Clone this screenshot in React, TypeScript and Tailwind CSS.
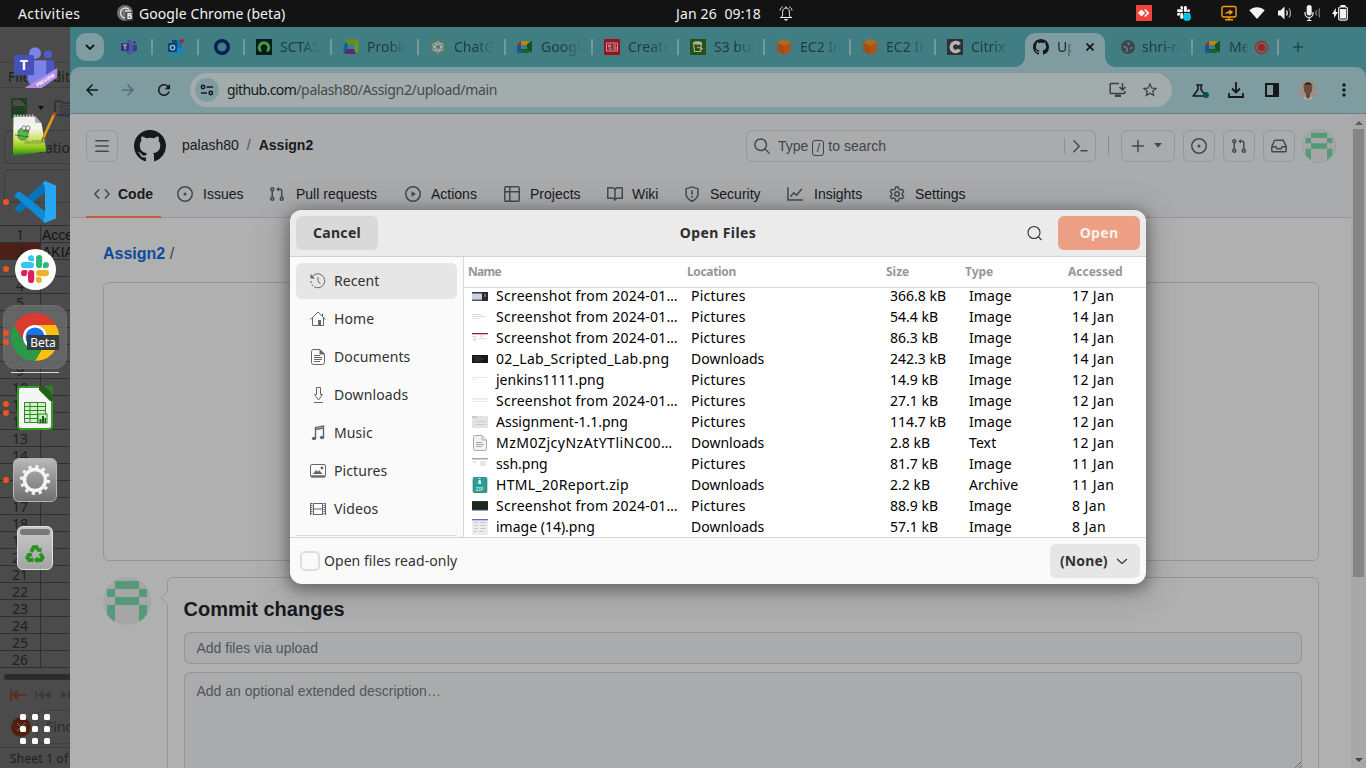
import React from "react";
import { MdArrowBack, MdArrowForward, MdMoreVert, MdOutlineScience, MdRefresh, MdStarBorder } from "react-icons/md";

const UI = "font-['Noto_Sans',sans-serif]";
const ARIAL = "font-['Liberation_Sans',sans-serif]";

/* ---------- shared drawings ---------- */

function GithubMark({ className }: { className: string }) {
  return (
    <svg viewBox="0 0 16 16" className={`shrink-0 ${className}`} fill="#15191d">
      <path d="M8 0C3.58 0 0 3.58 0 8c0 3.54 2.29 6.53 5.47 7.59.4.07.55-.17.55-.38 0-.19-.01-.82-.01-1.49-2.01.37-2.53-.49-2.69-.94-.09-.23-.48-.94-.82-1.13-.28-.15-.68-.52-.01-.53.63-.01 1.08.58 1.23.82.72 1.21 1.87.87 2.33.66.07-.52.28-.87.51-1.07-1.78-.2-3.64-.89-3.64-3.95 0-.87.31-1.59.82-2.15-.08-.2-.36-1.02.08-2.12 0 0 .67-.21 2.2.82.64-.18 1.32-.27 2-.27s1.36.09 2 .27c1.53-1.04 2.2-.82 2.2-.82.44 1.1.16 1.92.08 2.12.51.56.82 1.27.82 2.15 0 3.07-1.87 3.75-3.65 3.95.29.25.54.73.54 1.48 0 1.07-.01 1.93-.01 2.2 0 .21.15.46.55.38A8.01 8.01 0 0 0 16 8c0-4.42-3.58-8-8-8z" />
    </svg>
  );
}

function Oct({ children, className = "size-4" }: { children: React.ReactNode; className?: string }) {
  return (
    <svg viewBox="0 0 16 16" className={`shrink-0 ${className}`} fill="none" stroke="#44494f" strokeWidth="1.5" strokeLinecap="round" strokeLinejoin="round">
      {children}
    </svg>
  );
}

const oct = {
  code: <Oct><path d="M4.700 3.800L.9 8l3.800 4.200M11.300 3.800L15.100 8l-3.800 4.200" /></Oct>,
  issue: <Oct><circle cx="8" cy="8" r="7.250" /><circle cx="8" cy="8" r="1.500" fill="#44494f" stroke="none" /></Oct>,
  pull: <Oct><circle cx="3.250" cy="3.250" r="1.500" /><circle cx="3.250" cy="12.750" r="1.500" /><circle cx="12.750" cy="12.750" r="1.500" /><path d="M3.250 5v6M12.750 11V5c0-1-.6-1.750-1.750-1.750H8.500" /><path d="M10 .9v4.700L7.400 3.250z" fill="#44494f" stroke="none" /></Oct>,
  play: <Oct><circle cx="8" cy="8" r="7.250" /><path d="M6.500 5.200v5.600L11 8z" fill="#44494f" stroke="none" /></Oct>,
  table: <Oct><rect x=".75" y=".75" width="14.500" height="14.500" rx="1" /><path d="M.8 5.800h14.400M5.800 .8v14.400" /></Oct>,
  book: <Oct><path d="M8 4.500C8 3 6.800 1.750 5.250 1.750H.75v10.500h4.700C7 12.250 8 13 8 14.200c0-1.200 1-1.950 2.550-1.950h4.700V1.750h-4.500C9.200 1.750 8 3 8 4.500zV14" /></Oct>,
  shield: <Oct><path d="M8 .9l6 2v4.600c0 3.500-2.200 6-6 7.700-3.800-1.700-6-4.200-6-7.700V2.900z" /><path d="M8 4.700v3.500" /><circle cx="8" cy="10.700" r="1" fill="#44494f" stroke="none" /></Oct>,
  graph: <Oct><path d="M.9 1.700v12.400h14.300M3.800 10.200l3-3.500 2.700 2.500 5-6" /></Oct>,
  gear: <Oct><circle cx="8" cy="8" r="2.250" /><path d="M6.700 1h2.600l.5 2.100 1.400.8 2.100-.6 1.400 2.300L13.200 7.200v1.600l1.500 1.600-1.400 2.300-2.100-.6-1.400.8-.5 2.100H6.700l-.5-2.100-1.400-.8-2.100.6-1.400-2.300 1.500-1.600V7.200L1.300 5.600l1.400-2.300 2.100.6 1.400-.8z" strokeWidth="1.400" /></Oct>,
  inbox: <Oct><path d="M3.700 2.250h8.600l2.900 6.200v4.300c0 .6-.4 1-1 1H1.800c-.6 0-1-.4-1-1v-4.300zM.9 8.750h3.900l1.200 2h4l1.200-2h3.900" /></Oct>,
  bars: <Oct><path d="M1.700 2.700h12.600M1.700 8h12.600M1.700 13.300h12.600" strokeWidth="1.400" /></Oct>,
  search: <Oct><circle cx="6.700" cy="6.700" r="5.800" /><path d="M11 11l4 4" /></Oct>,
  plus: <Oct><path d="M8 2.500v11M2.500 8h11" /></Oct>,
  caret: <Oct><path d="M4 5h8L8 9.500z" fill="#44494f" stroke="none" /></Oct>,
  prompt: <Oct><path d="M.9 2.700L6.200 8.200.9 13.700M8 12.700h6" /></Oct>,
};

function Identicon({ className }: { className: string }) {
  return (
    <svg viewBox="0 0 48 48" className={className}>
      <defs><clipPath id="idc"><circle cx="24" cy="24" r="24" /></clipPath></defs>
      <circle cx="24" cy="24" r="24" fill="#a6a6a6" />
      <path clipPath="url(#idc)" fill="#549a79" d="M12 4h24v8H12zM4 12h8v8H4zM36 12h8v8h-8zM12 20h24v8H12zM4 28h8v16H4zM36 28h8v16h-8z" />
    </svg>
  );
}

function SlackMark({ className, mono }: { className: string; mono?: boolean }) {
  const c = mono ? ["#fff", "#fff", "#fff", "#fff"] : ["#36c5f0", "#2eb67d", "#e01e5a", "#ecb22e"];
  return (
    <svg viewBox="0 0 28 28" className={className}>
      <rect x="0" y="7" width="13" height="6.2" rx="3.1" fill={c[0]} />
      <path d="M13 6.200H10A3 3 0 1 1 13 3z" fill={c[0]} />
      <rect x="15" y="0" width="6.200" height="13.200" rx="3.100" fill={c[1]} />
      <path d="M22 13V10a3 3 0 1 1 3 3z" fill={c[1]} />
      <path d="M6.200 15v3a3.100 3.100 0 1 1-3.100-3z" fill={c[2]} />
      <rect x="7" y="15" width="6.200" height="13" rx="3.100" fill={c[2]} />
      <rect x="15" y="15" width="13" height="6.200" rx="3.100" fill={c[3]} />
      <path d="M15 22h3a3 3 0 1 1-3 3z" fill={c[3]} />
    </svg>
  );
}

/* ---------- GNOME top bar ---------- */

function TopBar() {
  return (
    <header className={`relative flex h-[27px] shrink-0 items-center bg-[#131313] pb-px text-[14px] text-[#f2f2f2] ${UI}`}>
      <span className="ml-[18px] w-[99px] tracking-[0.4px]">Activities</span>
      <svg viewBox="0 0 16 16" className="size-4">
        <circle cx="8" cy="8" r="8" fill="#727272" />
        <path d="M12 4.500A5 5 0 1 0 8 13M8 6h6" fill="none" stroke="#ddd" strokeWidth="1.400" />
        <rect x="8.500" y="7" width="7.500" height="8.500" rx="1" fill="#484848" />
        <text x="9.800" y="14" fontSize="8" fontWeight="700" fill="#fff" fontFamily="Noto Sans">B</text>
      </svg>
      <span className="ml-[6px] w-[537px] tracking-[0.08px]">Google Chrome (beta)</span>
      <span className="w-[102px] whitespace-pre tracking-[0.15px]">Jan 26  09:18</span>
      <svg viewBox="0 0 16 16" className="size-4" fill="none" stroke="#f2f2f2" strokeWidth="1">
        <path d="M2 12.500h12M3.500 12.500C5 11 4.500 8 4.700 6c.3-2 1.500-3 3.300-3s3 1 3.300 3c.2 2-.3 5 1.200 6.500M2 5.500c.3-1.800 1.200-3 2.700-3.800M14 5.500c-.3-1.800-1.200-3-2.700-3.800M8 1.500V3" />
        <path d="M6 14h4l-1 1.500H7z" fill="#f2f2f2" stroke="none" />
      </svg>
      <div className="ml-[342px] flex items-center">
        <svg viewBox="0 0 16 16" className="size-4">
          <path fill="#ef443b" d="M0 0h16v16H0z" />
          <path fill="#fff" d="M2 8l3.500-3.500L9 8l-3.500 3.500z" />
          <path fill="none" stroke="#fff" strokeWidth="1.700" d="M8.700 4.500L12.200 8l-3.500 3.500" />
        </svg>
        <div className="relative ml-6 size-4">
          <SlackMark mono className="mt-px ml-px size-[13px]" />
          <span className="absolute right-px bottom-0 size-2 rounded-full bg-[#00bfe8]" />
        </div>
        <svg viewBox="0 0 16 16" className="ml-[29px] size-4" fill="none" stroke="#f99b11" strokeWidth="1.400">
          <rect x="1" y="1.500" width="14" height="10.500" rx="1.500" />
          <path d="M4 14.700h8M8 12v2.500" />
          <path d="M4 9.500c.5-2.500 2-3.300 4.300-3.300V4.300L12.300 7.300 8.300 10V8.300C6.500 8.200 5 8.500 4 9.500z" fill="#f99b11" stroke="none" />
        </svg>
        <svg viewBox="0 0 16 12" className="ml-3 h-3 w-4"><path fill="#f2f2f2" d="M.3 3.300C4.500-.8 11.500-.8 15.700 3.300L8 12z" /></svg>
        <svg viewBox="0 0 16 16" className="ml-3 size-4" fill="none" stroke="#f2f2f2" strokeWidth="1.200">
          <path d="M1 5.500h2.500L7.500 1.500v13L3.500 10.500H1z" fill="#f2f2f2" stroke="none" />
          <path d="M9.500 5.500c1 1.500 1 3.500 0 5" /><path d="M12 3.500c2 2.500 2 6.500 0 9" stroke="#aaa" />
        </svg>
        <svg viewBox="0 0 16 16" className="ml-[11px] size-4" fill="none" stroke="#f2f2f2" strokeWidth="1.200">
          <rect x="2.700" y="0" width="5" height="10.500" rx="2.500" fill="#f2f2f2" stroke="none" />
          <path d="M1 7v1.500a4 4 0 0 0 8 0V7M5.200 12.500v3M3 15.500h4.500" />
          <path d="M13 5.500c-1.500 1-1.500 4 0 5M16 3.500c-1.300 1.500-1.300 7 0 9" stroke="#888" />
        </svg>
        <svg viewBox="0 0 16 16" className="ml-3 size-4">
          <path fill="#f2f2f2" d="M4 3L0 9h2v4l4-6H3.800z" />
          <path fill="none" stroke="#f2f2f2" strokeWidth="1.200" d="M8.500 2h5a1.800 1.800 0 0 1 1.800 1.800v9.600a1.800 1.800 0 0 1-1.800 1.800h-5a1.800 1.800 0 0 1-1.800-1.800V3.800A1.800 1.800 0 0 1 8.500 2z" />
          <path fill="#f2f2f2" d="M8.500 0h5v2h-5zM8 4h6v9.500H8z" />
        </svg>
      </div>
    </header>
  );
}

/* ---------- spreadsheet behind the dock ---------- */

const ROWS = Array.from({ length: 26 }, (_, i) => i + 1);

function Spreadsheet() {
  return (
    <div className={`flex h-full flex-col overflow-hidden whitespace-nowrap bg-[#4b4b4b] text-[#202020] ${UI}`}>
      <div className="h-9 shrink-0 border-b border-[#3f3f3f]" />
      <div className="flex h-[25px] shrink-0 items-center border-b border-[#3f3f3f] pt-[2px] pl-2 text-[14px]">File&nbsp;&nbsp;&nbsp;&nbsp;Edit</div>
      <div className="flex h-10 shrink-0 items-center pl-[11px]">
        <svg viewBox="0 0 16 20" className="h-5 w-4 shrink-0" fill="none" stroke="#123c10" strokeWidth="1.300"><path d="M2 1h8l5 5v13H1V2z" /><path d="M10 1h5v5zM3 9h10v7H3zM3 11.500h10M3 14h10M6.500 9v7M10 9v7" /></svg>
        <svg viewBox="0 0 6 4" className="ml-[11px] h-1 w-1.5 shrink-0"><path d="M0 0h6L3 4z" fill="#111" /></svg>
        <svg viewBox="0 0 24 18" className="ml-[10px] h-[18px] w-6 shrink-0" fill="none" stroke="#252525" strokeWidth="1.200"><path d="M1 16V3l1-1h5l2 2h14v12z" /><path d="M7 7h12v11H7zM9 10h8M9 12h8M9 14h6" stroke="#30304a" /></svg>
      </div>
      <div className="mt-0.5 ml-1 flex h-[34px] shrink-0 items-center rounded-l-md border border-r-0 border-[#3d3d3d] pl-[7px] text-[14px]">Liberation Sans</div>
      <div className="mt-[5px] ml-1 h-[34px] shrink-0 rounded-tl-md border border-r-0 border-[#3d3d3d]" />
      <div className="h-[23px] shrink-0 border-b border-[#303030]" />
      <div className="shrink-0">
        {ROWS.map((n) => (
          <div key={n} className="flex h-[17px] border-b border-[#303030] text-[14px] leading-[18px]">
            <div className={n === 2 ? "w-10 shrink-0 bg-[#4b2016] text-center" : "w-10 shrink-0 text-center"}>{n}</div>
            <div className={`flex-1 border-l border-[#303030] pl-px text-[14px] leading-[18px] text-[#141414] ${ARIAL}`}>
              {n === 1 ? "Access" : n === 2 ? "AKIA" : ""}
            </div>
          </div>
        ))}
      </div>
      <div className="mt-[6px] ml-1 h-1.5 shrink-0 rounded-l-full bg-[#2c2c2c]" />
      <div className="mt-2 ml-[10px] flex h-3.5 shrink-0 items-center gap-[9px]">
        <svg viewBox="0 0 16 12" className="h-3 w-4 shrink-0" stroke="#5f2a20" strokeWidth="1.600" fill="none"><path d="M1 0v12M3 6h13" /><path d="M2 6l5-3v6z" fill="#5f2a20" /></svg>
        <svg viewBox="0 0 16 10" className="h-2.5 w-4 shrink-0" fill="#3a3a3a"><path d="M0 1h1.500v8H0zM8.500 1v8L2 5zM15.500 1v8L9 5z" /></svg>
        <svg viewBox="0 0 10 10" className="h-2.5 w-2.5 shrink-0" fill="#3a3a3a"><path d="M1 1l6 4-6 4zM8 1l4 4-4 4z" /></svg>
      </div>
      <div className="mt-2 ml-[11px] flex h-[34px] shrink-0 items-center text-[14px] text-[#2b2b2b]">
        <svg viewBox="0 0 20 20" className="size-5 shrink-0"><circle cx="10" cy="10" r="10" fill="#50200f" /><path d="M6 6l8 8M14 6l-8 8" stroke="#85756f" /></svg>
        <div className="ml-[6px] flex h-[34px] flex-1 items-center rounded-l-md border border-r-0 border-[#3f3f3f] pb-[2px] pl-[8px]">Find</div>
      </div>
      <div className="mt-[3px] h-6 shrink-0 border-t border-[#3b3b3b] pl-[10px] text-[12px] leading-[22px] tracking-[0.2px]">Sheet 1 of 1</div>
    </div>
  );
}

/* ---------- dock ---------- */

function Dots({ count }: { count: number }) {
  return (
    <div className="flex w-[12px] shrink-0 flex-col items-center gap-[3px]">
      {Array.from({ length: count }, (_, i) => <span key={i} className="size-1.5 rounded-full bg-[#e95420]" />)}
    </div>
  );
}

function DockItem({ dots = 0, className, children }: { dots?: number; className: string; children: React.ReactNode }) {
  return (
    <div className={`flex shrink-0 items-center ${className}`}>
      <Dots count={dots} />
      <div className="flex w-[46px] justify-center">{children}</div>
    </div>
  );
}

function Dock() {
  return (
    <nav className="absolute inset-0 flex flex-col pt-[6px]">
      <DockItem className="h-[68px]">
        <svg viewBox="0 0 46 43" className="ml-[2px] h-[43px] w-[46px]">
          <circle cx="22" cy="6.500" r="6.200" fill="#7b83eb" /><circle cx="35.500" cy="8" r="4.300" fill="#5059c9" />
          <path d="M14 14h20v16c0 7-5 11-11 11s-9-4-9-9z" fill="#7b83eb" /><path d="M34 14h8v14c0 3-3 6-8 6z" fill="#4d56c6" />
          <rect x="0" y="8.500" width="21" height="21" rx="2" fill="#4650b8" />
          <text x="6" y="24" fontSize="15" fontWeight="700" fill="#fff" fontFamily="Noto Sans">T</text>
          <path d="M11 43L45 22v10L29 43z" fill="#b08ae6" />
          <text transform="translate(24.500 42) rotate(-32)" fontSize="5" fontWeight="700" fill="#fff" fontFamily="Noto Sans">PREVIEW</text>
        </svg>
      </DockItem>
      <DockItem className="h-[67px]">
        <svg viewBox="0 0 46 46" className="size-[46px]">
          <defs>
            <linearGradient id="pad" x1="0" y1="0" x2="0" y2="1"><stop offset="0" stopColor="#eee" /><stop offset=".3" stopColor="#f4f6ef" /><stop offset=".6" stopColor="#c8e55a" /><stop offset=".8" stopColor="#8ec61a" /><stop offset="1" stopColor="#1f8a14" /></linearGradient>
          </defs>
          <path d="M1.500 4.500h22l6 7 5 28-33.500 4z" fill="url(#pad)" />
          <path d="M2 3.500h21" stroke="#bdbdbd" strokeWidth="2" strokeDasharray="1.500 1.500" />
          <path d="M22.500 4l1 7 6 0z" fill="#a7aab0" />
          <path d="M6 19c2-4 9-4 11 0l-2 7c-3 3-7 3-9-1z" fill="#55b848" stroke="#355f2c" strokeWidth=".6" />
          <path d="M3 23l14 2M10 15l7 4M11 19h6" stroke="#4a4a3c" strokeWidth=".8" />
          <circle cx="12" cy="16" r="2.200" fill="#eee" stroke="#444" strokeWidth=".6" /><circle cx="16" cy="16" r="2.200" fill="#eee" stroke="#444" strokeWidth=".6" />
          <text x="12" y="32" fontSize="6.500" fontStyle="italic" fill="#59722c" fontFamily="Liberation Serif" transform="rotate(-3 12 32)">Notepad</text>
          <path d="M31 26.500L42 2.500" stroke="#e79a11" strokeWidth="2.600" /><path d="M42 3.500l1.500-3" stroke="#c4453c" strokeWidth="2.600" /><path d="M31.500 25.500l-2 4" stroke="#7a5530" strokeWidth="1.300" />
        </svg>
      </DockItem>
      <DockItem dots={1} className="h-[67px]">
        <svg viewBox="0 0 42 42" className="size-[42px]">
          <path d="M0 27.500L31 0v11.500L5 32z" fill="#0a73b8" /><path d="M0 14.500L5 10l26 20.500V42z" fill="#0f8ad4" />
          <path d="M31 0l11 4.500v33L31 42l-2-2 2-4V6l-2-4z" fill="#27a7f2" />
        </svg>
      </DockItem>
      <DockItem dots={1} className="h-[68px]">
        <div className="flex size-[41px] items-center justify-center rounded-full bg-white"><SlackMark className="size-7" /></div>
      </DockItem>
      <div className="mt-[2px] ml-[3px] flex h-16 w-16 shrink-0 items-center rounded-xl border border-[#6d6d6d] bg-[#6b6b6b]/80">
        <div className="-ml-[4px]"><Dots count={2} /></div>
        <div className="relative -ml-px size-12">
          <svg viewBox="0 0 48 48" className="size-12">
            <path d="M24 12h20.800A24 24 0 0 0 3.200 12L13.600 30A12 12 0 0 1 24 12z" fill="#dd3a2e" />
            <path d="M44.800 12H24a12 12 0 0 1 10.400 18L24 48A24 24 0 0 0 44.800 12" fill="#fdc00f" />
            <path d="M3.200 12A24 24 0 0 0 24 48l10.400-18a12 12 0 0 1-20.800 0z" fill="#2a9a4a" />
            <circle cx="24" cy="24" r="12" fill="#fff" /><circle cx="24" cy="24" r="9.500" fill="#1a73e8" />
          </svg>
          <span className={`absolute top-[22px] left-4 flex h-[15px] w-8 items-center justify-center bg-[#353d42] text-[12px] text-white ${UI}`}>Beta</span>
        </div>
      </div>
      <div className="mt-[3px] ml-[11px] h-px w-12 shrink-0 bg-[#d8d8d8]" />
      <DockItem dots={2} className="h-[70px]">
        <svg viewBox="0 0 36 44" className="h-11 w-9">
          <path d="M4 1h19l12 13v26a3 3 0 0 1-3 3H4a3 3 0 0 1-3-3V4a3 3 0 0 1 3-3z" fill="#f5f5f5" stroke="#2fa022" strokeWidth="2" />
          <path d="M22 0h4l10 10v5h-3L22 4z" fill="#245f1c" /><path d="M28 0h8v8.500z" fill="#23861a" />
          <path d="M7.500 16.500h21v20h-21zM7.500 20.500h21M7.500 24.500h21M7.500 28.500h21M7.500 32.500h21M13 16.500v20M20.500 16.500v20" fill="#d5f0cc" stroke="#2c8a24" />
          <rect x="21" y="28" width="9" height="9" fill="#c9ecc0" stroke="#2c8a24" /><path d="M22.500 33h2v4h-2zM25 30h2v7h-2zM27.500 32h1.500v5h-1.500z" fill="#176112" />
        </svg>
      </DockItem>
      <DockItem dots={1} className="h-[74px]">
        <div className="flex size-11 items-center justify-center rounded-md border border-[#b5b5b5] bg-linear-to-b from-[#b8b8b8] to-[#6f6f6f]">
          <svg viewBox="0 0 30 30" className="size-[30px]">
            <circle cx="15" cy="15" r="13.500" fill="none" stroke="#f4f4f4" strokeWidth="3" strokeDasharray="3.200 3.860" />
            <circle cx="15" cy="15" r="10.500" fill="none" stroke="#f4f4f4" strokeWidth="3.500" />
          </svg>
        </div>
      </DockItem>
      <DockItem className="h-[62px]">
        <div className="flex h-11 w-9 flex-col items-center rounded-md border border-[#e0e0e0] bg-linear-to-b from-[#c9c9c9] to-[#a4a4a4]">
          <div className="mt-0.5 h-[6px] w-[30px] rounded-full bg-[#787878]" />
          <svg viewBox="0 0 20 20" className="mt-[9px] size-5" fill="none" stroke="#279021" strokeWidth="3.800">
            <path d="M6.300 7.800l2.300-4.600h3l1.600 2.700" /><path d="M15.300 9.500l2.300 4-1.500 2.500h-4.300" /><path d="M8.500 16H4l-1.600-2.500 2-3.500" />
            <path d="M11 7l5 1.500 1-5zM12.500 12.500v7L8.800 16zM1.500 9.500l5-1 1 5z" fill="#279021" stroke="none" />
          </svg>
        </div>
      </DockItem>
      <div className="mt-[135px] ml-5 grid size-[30px] grid-cols-3 gap-1.5">
        {Array.from({ length: 9 }, (_, i) => <span key={i} className="size-1.5 rounded-[1.5px] bg-white" />)}
      </div>
    </nav>
  );
}

/* ---------- browser ---------- */

const FAV = "size-4 shrink-0";
const favicons: Record<string, React.ReactNode> = {
  teams: <svg viewBox="0 0 16 16" className={FAV}><circle cx="8.500" cy="2.500" r="2.300" fill="#4c51a2" /><circle cx="13.500" cy="3.500" r="1.500" fill="#373d8c" /><path d="M5 5h7v7a3.500 3.500 0 0 1-7 0z" fill="#4f549f" /><path d="M12 6h4v5a2.500 2.500 0 0 1-4 1z" fill="#373d8c" /><rect y="4" width="8" height="8" rx="1" fill="#32387f" /><path d="M2 6h4M4 6v4.500" stroke="#bbb" strokeWidth="1.200" /></svg>,
  outlook: <svg viewBox="0 0 16 16" className={FAV}><path d="M4 1h10v13H4z" fill="#1c6f9f" /><path d="M4 1h5v5H4z" fill="#0d4c7e" /><path d="M2 9h14v6.500H3z" fill="#1885b4" /><rect y="4" width="9" height="9" rx="1" fill="#06467c" /><circle cx="4.500" cy="8.500" r="2.200" fill="none" stroke="#b4b8bb" strokeWidth="1.300" /><circle cx="14" cy="2" r="2" fill="#a52425" /></svg>,
  ring: <svg viewBox="0 0 16 16" className={FAV}><circle cx="8" cy="8" r="6.300" fill="none" stroke="#03204f" strokeWidth="3.400" /></svg>,
  snow: <svg viewBox="0 0 16 16" className={FAV}><path d="M0 0h16v16H0z" fill="#031d24" /><path d="M5 12.300a4.800 4.800 0 1 1 6 0" fill="none" stroke="#4c9a30" strokeWidth="3" /></svg>,
  cube: <svg viewBox="0 0 16 16" className={FAV}><path d="M4 0h10l2 3-3 2H4L2 3z" fill="#72881c" /><path d="M2 3l3 2-1 6-1 3-3-1z" fill="#0a6394" /><path d="M1 14l3-4h8l1 5H3z" fill="#5b2a77" /><path d="M16 3l-1 9-2 3-2-5 1-5z" fill="#629b25" /></svg>,
  gpt: <svg viewBox="0 0 16 16" className={FAV}><rect width="16" height="16" rx="2" fill="#537a6d" /><g fill="none" stroke="#a6b3af" strokeWidth="1"><ellipse cx="8" cy="8" rx="2.500" ry="5.500" /><ellipse cx="8" cy="8" rx="2.500" ry="5.500" transform="rotate(60 8 8)" /><ellipse cx="8" cy="8" rx="2.500" ry="5.500" transform="rotate(120 8 8)" /></g></svg>,
  meet: <svg viewBox="0 0 16 16" className={FAV}><path d="M4 2h8v4H4z" fill="#b58b08" /><path d="M4 2v4H0z" fill="#9e2d25" /><path d="M0 6h4v8H1l-1-1z" fill="#244f9d" /><path d="M4 10h8v4H4z" fill="#16622f" /><path d="M10 5l5-3v12l-5-4z" fill="#145126" /></svg>,
  red: <svg viewBox="0 0 16 16" className={FAV}><path d="M0 0h16v16H0z" fill="#941522" /><path d="M2.500 4h11v8h-11zM4.500 6h2.500v2H4.500zM4.500 10H8M9 6h3M9 8h3v2H9" fill="none" stroke="#c69a9f" /></svg>,
  s3: <svg viewBox="0 0 16 16" className={FAV}><path d="M0 0h16v16H0z" fill="#285012" /><path d="M3.500 4l1 8.500h6l1-8.500zM3.500 4c1-1.500 7-1.500 8 0s-7 1.500-8 0M7 8l6 2" fill="none" stroke="#a8b5a0" strokeWidth="1.200" /></svg>,
  ec2: <svg viewBox="0 0 16 16" className={FAV}><path d="M8 0l7 3.500L8 7 1 3.500z" fill="#b16b1b" /><path d="M1 3.500L8 7v9l-7-4z" fill="#a44c16" /><path d="M15 3.500L8 7v9l7-4z" fill="#b15318" /></svg>,
  citrix: <svg viewBox="0 0 16 16" className={FAV}><path d="M0 0h16v16H0z" fill="#302f35" /><path d="M12.500 5.500A4.500 4.500 0 1 0 12.500 10.500" fill="none" stroke="#b5b5b5" strokeWidth="3.500" /></svg>,
  globe: <svg viewBox="0 0 16 16" className={FAV}><circle cx="8" cy="8" r="7" fill="#3e4447" /><path d="M3 7.500c2 0 3.500.5 4 2s-.5 1.500 0 3.500M8.500 3c-1 1.500 0 2 1.500 2.500M10 9c1 .5 2 0 2.500-1" stroke="#5c8388" strokeWidth="1.600" fill="none" /></svg>,
};

const SEP = <span className="ml-auto h-4 w-0.5 shrink-0 bg-[#77999c]" />;
const FADE = "overflow-hidden whitespace-nowrap [mask-image:linear-gradient(to_right,black_55%,transparent)]";

function Tab({ icon, label, width, last }: { icon: string; label: string; width: string; last?: boolean }) {
  return (
    <div className={`flex h-full shrink-0 items-center pl-[11px] ${width}`}>
      {favicons[icon]}
      <span className={`ml-2 w-10 pb-px ${FADE}`}>{label}</span>
      {!last && SEP}
    </div>
  );
}

function TabStrip() {
  return (
    <div className={`flex h-10 shrink-0 items-center bg-[#407e84] pl-[6px] text-[14px] text-[#203c40] ${UI}`}>
      <div className="mr-px flex size-7 shrink-0 items-center justify-center rounded-[10px] bg-[#7f9da0]">
        <svg viewBox="0 0 10 6" className="h-1.5 w-2.5" fill="none" stroke="#101517" strokeWidth="1.800"><path d="M1 1l4 4 4-4" /></svg>
      </div>
      <div className="flex w-[48px] shrink-0 items-center pl-4">{favicons.teams}{SEP}</div>
      <div className="flex w-[46px] shrink-0 items-center pl-[15px]">{favicons.outlook}{SEP}</div>
      <div className="flex w-[46px] shrink-0 items-center pl-[15px]">{favicons.ring}{SEP}</div>
      <Tab icon="snow" label="SCTASK" width="w-[87px]" />
      <Tab icon="cube" label="Problem" width="w-[87px]" />
      <Tab icon="gpt" label="ChatGPT" width="w-[87px]" />
      <Tab icon="meet" label="Google" width="w-[87px]" />
      <Tab icon="red" label="Create" width="w-[86px]" />
      <Tab icon="s3" label="S3 buck" width="w-[86px]" />
      <Tab icon="ec2" label="EC2 Inst" width="w-[86px]" />
      <Tab icon="ec2" label="EC2 Inst" width="w-[85px]" />
      <Tab icon="citrix" label="Citrix W" width="w-[88px]" last />
      <div className="relative ml-px h-10 w-20 shrink-0 pt-[6px]">
        <span className="absolute bottom-0 -left-[10px] size-[10px] bg-[radial-gradient(circle_at_0_0,transparent_9.5px,#7f9da0_10px)]" />
        <span className="absolute -right-[10px] bottom-0 size-[10px] bg-[radial-gradient(circle_at_100%_0,transparent_9.5px,#7f9da0_10px)]" />
        <div className="flex h-[34px] items-center rounded-t-[10px] bg-[#7f9da0] pb-[6px] pl-2 text-[#17262a]">
          <GithubMark className="size-4" />
          <span className={`ml-2 w-4 pb-px ${FADE}`}>Upl</span>
          <svg viewBox="0 0 8 8" className="ml-[13px] size-2" stroke="#111719" strokeWidth="1.700"><path d="M.5.5l7 7M7.500.5l-7 7" /></svg>
        </div>
      </div>
      <div className="ml-[4px] flex w-[84px] shrink-0 items-center pl-[11px]">
        {favicons.globe}<span className={`ml-[6px] w-10 pb-px ${FADE}`}>shri-ram</span>{SEP}
      </div>
      <div className="flex w-[86px] shrink-0 items-center pl-[12px]">
        {favicons.meet}<span className="ml-2 w-5 overflow-hidden pb-px whitespace-nowrap [mask-image:linear-gradient(to_right,black_65%,transparent)]">Mee</span>
        <svg viewBox="0 0 16 16" className="ml-[5px] size-[15px] shrink-0"><circle cx="8" cy="8" r="6.500" fill="none" stroke="#a02e2c" strokeWidth="1.700" /><circle cx="8" cy="8" r="4" fill="#a02320" /></svg>
        {SEP}
      </div>
      <svg viewBox="0 0 10 10" className="ml-[14px] size-2.5" stroke="#20484c" strokeWidth="1.500"><path d="M5 0v10M0 5h10" /></svg>
    </div>
  );
}

function Toolbar() {
  return (
    <div className="bg-[#407e84]">
      <div className={`flex h-[47px] items-center rounded-t-[10px] border-b border-[#637f82] bg-[#7f9da0] text-[#15191b] ${UI}`}>
        <MdArrowBack size={18} className="ml-[13px]" />
        <MdArrowForward size={18} className="ml-[18px] text-[#536c6f]" />
        <MdRefresh size={18} className="ml-[18px]" />
        <div className="ml-[17px] flex h-[34px] w-[982px] items-center rounded-full bg-[#a3acac] pl-[5px]">
          <div className="flex size-6 items-center justify-center rounded-full bg-[#7f9da0]">
            <svg viewBox="0 0 14 12" className="h-3 w-3.5" fill="none" stroke="#15191b" strokeWidth="1.500"><circle cx="3" cy="3" r="1.700" /><path d="M6.500 3H13M1 9h6" /><circle cx="10.800" cy="9" r="1.700" /></svg>
          </div>
          <span className="ml-2 w-[882px] pb-px text-[14px] tracking-[-0.33px] text-[#45494a]"><span className="tracking-[-0.6px] text-[#15191b]">github.com</span>/palash80/Assign2/upload/main</span>
          <svg viewBox="0 0 18 16" className="h-4 w-[18px]" fill="none" stroke="#3b4042" strokeWidth="1.500"><path d="M10 1.500H2a.8.8 0 0 0-.8.8v8.400c0 .5.300.8.800.8h13c.5 0 .8-.3.800-.8V9M13.500 1v6M10.500 5l3 3 3-3" /><path d="M6 12.500h6v2.500H6z" fill="#3b4042" stroke="none" /></svg>
          <MdStarBorder size={18} className="ml-[14px]" color="#3b4042" />
        </div>
        <div className="relative ml-[18px]"><MdOutlineScience size={19} /><span className="absolute right-0 bottom-0.5 size-1.5 rounded-full bg-[#04515a]" /></div>
        <svg viewBox="0 0 16 16" className="ml-[19px] size-4" fill="none" stroke="#15191b" strokeWidth="1.800"><path d="M8 0v10M4 6.500l4 4 4-4M1 11v4h14v-4" /></svg>
        <svg viewBox="0 0 16 16" className="ml-[20px] size-4"><path d="M2 2h12v12H2z" fill="none" stroke="#15191b" strokeWidth="2" /><path d="M9 2h6v12H9z" fill="#15191b" /></svg>
        <svg viewBox="0 0 20 20" className="ml-[18px] size-5">
          <defs><clipPath id="face"><circle cx="10" cy="10" r="10" /></clipPath></defs>
          <g clipPath="url(#face)"><path d="M0 0h20v20H0z" fill="#97908c" /><path d="M3 20c1-5 13-5 14 0z" fill="#b1aaa9" /><path d="M8 12h4v5l-2 2-2-2z" fill="#6d4537" /><ellipse cx="10" cy="8.500" rx="4.300" ry="6" fill="#714a3b" /><path d="M5.500 7C5 1 15 1 14.500 7l-1-2.500h-7z" fill="#1d1b1b" /></g>
        </svg>
        <MdMoreVert size={20} className="ml-4" />
      </div>
    </div>
  );
}

const NAV = [
  { icon: oct.code, label: "Code", width: "w-[75px] gap-2", active: true },
  { icon: oct.issue, label: "Issues", width: "w-[84px] gap-[10px]" },
  { icon: oct.pull, label: "Pull requests", width: "w-[128px] gap-[11px]" },
  { icon: oct.play, label: "Actions", width: "w-[91px] gap-[10px]" },
  { icon: oct.table, label: "Projects", width: "w-[95px] gap-[10px]" },
  { icon: oct.book, label: "Wiki", width: "w-[69px] gap-[9px]" },
  { icon: oct.shield, label: "Security", width: "w-[95px] gap-[10px]" },
  { icon: oct.graph, label: "Insights", width: "w-[94px] gap-[11px]" },
  { icon: oct.gear, label: "Settings", width: "w-[95px] gap-[10px]" },
];

const BTN = "flex h-8 shrink-0 items-center justify-center rounded-md border border-[#93979b]";

function GithubPage() {
  return (
    <div className={`flex min-h-0 flex-1 bg-[#b0b0b0] text-[14px] text-[#16191d] ${ARIAL}`}>
      <div className="flex w-[1281px] flex-col overflow-hidden">
        <div className="h-[104px] shrink-0 border-b border-[#92969a] bg-[#a9abad]">
          <div className="flex h-16 items-center pl-4">
            <div className={`${BTN} w-8`}>{oct.bars}</div>
            <GithubMark className="ml-4 size-8" />
            <span className="ml-4 pb-px">palash80</span>
            <span className="mx-2 pb-px text-[#4c5157]">/</span>
            <span className="pb-px font-bold">Assign2</span>
            <div className="ml-auto flex items-center">
              <div className="flex h-8 w-[350px] items-center rounded-md border border-[#93979b] pl-[7px] text-[#40454c]">
                {oct.search}
                <span className="ml-2">Type</span>
                <span className="mx-1 mt-[3px] flex h-4 w-3 items-center justify-center rounded-[3px] border border-[#40454c] text-[12px]">/</span>
                <span>to search</span>
                <span className="mr-2 ml-auto h-4 w-px bg-[#8b8f93]" />
                {oct.prompt}
                <span className="w-[6px]" />
              </div>
              <span className="ml-3 h-5 w-px bg-[#8b8f93]" />
              <div className={`${BTN} ml-3 w-[54px] gap-1`}>{oct.plus}{oct.caret}</div>
              <div className={`${BTN} ml-2 w-8`}>{oct.issue}</div>
              <div className={`${BTN} ml-2 w-8`}>{oct.pull}</div>
              <div className={`${BTN} ml-2 w-8`}>{oct.inbox}</div>
              <div className="mr-[15px] ml-[7px] size-[34px] rounded-full border border-[#979a9c]"><Identicon className="size-8" /></div>
            </div>
          </div>
          <div className="flex gap-2 pl-4">
            {NAV.map(({ icon, label, width, active }) => (
              <div key={label} className={`flex h-10 shrink-0 items-center border-b-2 pb-[6px] pl-2 ${width} ${active ? "border-[#bb5e48] font-bold" : "border-transparent"}`}>
                {icon}{label}
              </div>
            ))}
          </div>
        </div>
        <div className="flex flex-1 flex-col pr-8 pl-[33px]">
          <div className="mt-[26px] h-5 text-[16px] leading-5 text-[#3b3f44]"><b className="text-[#0c4b9c]">Assign2</b> /</div>
          <div className="mt-[18px] h-[279px] shrink-0 rounded-md border border-[#92969a]" />
          <div className="mt-4 flex h-[260px] shrink-0">
            <Identicon className="size-12 shrink-0" />
            <div className="relative ml-4 flex-1 rounded-md border border-[#92969a] px-4">
              <svg viewBox="0 0 8 16" className="absolute top-3 -left-[8px] h-4 w-2"><path d="M8.500 0L1 8l7.500 8" fill="#b0b0b0" stroke="#92969a" /></svg>
              <h2 className="mt-[17px] -ml-[0.5px] text-[20px] leading-7 font-bold">Commit changes</h2>
              <div className="mt-[9px] flex h-8 items-center rounded-md border border-[#92969a] bg-[#a9abad] pl-[11.500px] text-[#50555b]">Add files via upload</div>
              <div className="relative mt-2 h-[130px] rounded-md border border-[#92969a] bg-[#a9abad] pt-2 pl-[11.500px] text-[#50555b]">Add an optional extended description…</div>
              <svg viewBox="0 0 8 8" className="absolute top-[184px] right-[17px] size-2" stroke="#666"><path d="M0 8l8-8M4 8l4-4" /></svg>
            </div>
          </div>
        </div>
      </div>
      <div className="flex w-[15px] flex-col items-center bg-[#a8a8a8]">
        <svg viewBox="0 0 8 4" className="mt-[7px] h-1 w-2 shrink-0"><path d="M4 0l4 4H0z" fill="#5c5c5c" /></svg>
        <div className="mt-1 h-[448px] w-[11px] shrink-0 bg-[#858585]" />
        <svg viewBox="0 0 8 4" className="mt-auto mb-1.5 h-1 w-2 shrink-0"><path d="M4 4l4-4H0z" fill="#444" /></svg>
      </div>
    </div>
  );
}

/* ---------- file chooser ---------- */

const sideIcon = "size-4 shrink-0";
const PLACES: { label: string; icon: React.ReactNode }[] = [
  { label: "Recent", icon: <svg viewBox="0 0 16 16" className={sideIcon} fill="none" stroke="#666"><path d="M2.200 3.500A7 7 0 1 1 4 13.700M8 4v4l2.500 3" /><path d="M.5 1v4.500H5z" fill="#666" stroke="none" /><path d="M1 8a7 7 0 0 0 3 5.700" strokeDasharray="2 1.500" /></svg> },
  { label: "Home", icon: <svg viewBox="0 0 16 16" className={sideIcon} fill="none" stroke="#666"><path d="M.5 8.500L8 1l7.500 7.500M2.500 7v7.500h11V7M12.500 5V2.500" /><path d="M8 9h3v6H8z" fill="#666" stroke="none" /></svg> },
  { label: "Documents", icon: <svg viewBox="0 0 16 16" className={sideIcon} fill="none" stroke="#666"><path d="M3 .5h7l4.500 4.500v8.500a2 2 0 0 1-2 2H3.500a2 2 0 0 1-2-2v-11a2 2 0 0 1 1.500-2zM4 6.500h6M4 8.500h8M4 10.500h8M4 12.500h6" /><path d="M10 1v4h4z" fill="#666" /></svg> },
  { label: "Downloads", icon: <svg viewBox="0 0 16 16" className={sideIcon} fill="none" stroke="#666"><path d="M6.500.5h4v7h2L8.500 13l-4-5.500h2zM4 15.500h9" /></svg> },
  { label: "Music", icon: <svg viewBox="0 0 16 16" className={sideIcon} fill="none" stroke="#666"><path d="M5.500 13V2.500l8-1.500v11M5.500 4.500l8-1.500" strokeWidth="1.400" /><ellipse cx="4" cy="13.500" rx="2.200" ry="1.800" fill="#666" stroke="none" /><ellipse cx="12" cy="12.500" rx="2.200" ry="1.800" fill="#666" stroke="none" /></svg> },
  { label: "Pictures", icon: <svg viewBox="0 0 16 16" className={sideIcon} fill="none" stroke="#666"><rect x=".5" y="1.500" width="15" height="12.500" rx="1.500" /><path d="M1 13.300h14" strokeWidth="2" /><path d="M3 11l3-4 2 2 1-2 3.500 4z" fill="#666" stroke="none" /><circle cx="12" cy="5" r="1.400" fill="#666" stroke="none" /></svg> },
  { label: "Videos", icon: <svg viewBox="0 0 16 16" className={sideIcon} fill="none" stroke="#666"><path d="M3.500 2v12M12.500 2v12M3.500 2.500h9M3.500 8h9M3.500 13.500h9" /><path d="M1.500 2v12M14.500 2v12" strokeWidth="2" strokeDasharray="1 1" /><path d="M.5 2v12M15.500 2v12" /></svg> },
];

const T = ({ children }: { children: React.ReactNode }) => <svg viewBox="0 0 16 16" className="mb-px size-4 shrink-0">{children}</svg>;

const SHOT = "tracking-[0.24px]";
const FILES: [React.ReactNode, string, string, string, string, string, string][] = [
  [<T><path d="M0 4h16v9H0z" fill="#cdd3de" /><path d="M0 4h16v1.500H0z" fill="#303744" /><path d="M10 4h6v9h-6z" fill="#292a32" /><path d="M12 6h2v3h-2z" fill="#806b62" /><path d="M0 11.500h10V13H0z" fill="#515a69" /></T>, "Screenshot from 2024-01…", "Pictures", "366.8 kB", "Image", "17 Jan", SHOT],
  [<T><path d="M0 5h9v1H0zM0 7h14v1H0zM0 9h7v1H0z" fill="#dadde1" /></T>, "Screenshot from 2024-01…", "Pictures", "54.4 kB", "Image", "14 Jan", SHOT],
  [<T><path d="M0 3h16v1.300H0z" fill="#8e2032" /><path d="M0 6h5v1H0zM1 8h3v3H1zM8 5h3v2H8zM7 8h8v1H7z" fill="#efdadd" /></T>, "Screenshot from 2024-01…", "Pictures", "86.3 kB", "Image", "14 Jan", SHOT],
  [<T><path d="M0 4h16v8H0z" fill="#15171a" /><path d="M1 6h8M3 8h9M2 10h7" stroke="#4d5157" strokeWidth=".7" /></T>, "02_Lab_Scripted_Lab.png", "Downloads", "242.3 kB", "Image", "14 Jan", "tracking-[0.33px]"],
  [<T><path d="M0 5h16v1H0zM0 7h5v1H0z" fill="#e8e9ec" /></T>, "jenkins1111.png", "Pictures", "14.9 kB", "Image", "12 Jan", ""],
  [<T><path d="M0 5h16v1.500H0zM0 8h16v1H0z" fill="#e6ebef" /></T>, "Screenshot from 2024-01…", "Pictures", "27.1 kB", "Image", "12 Jan", SHOT],
  [<T><path d="M0 2h16v12H0z" fill="#e2e4e6" /><path d="M0 2h5v2H0zM4 7h10v1H4zM3 10h11v1H3z" fill="#c9cdd2" /></T>, "Assignment-1.1.png", "Pictures", "114.7 kB", "Image", "12 Jan", ""],
  [<T><path d="M3 .5h7l4.500 4.500v8.500a2 2 0 0 1-2 2H3.500a2 2 0 0 1-2-2v-11A2 2 0 0 1 3 .5z" fill="#f3f3f3" stroke="#a8a8a8" /><path d="M10 1v4h4M4 7.500h6M4 9.500h8M4 11.500h6" fill="none" stroke="#a8a8a8" /></T>, "MzM0ZjcyNzAtYTliNC00…", "Downloads", "2.8 kB", "Text", "12 Jan", "tracking-[0.5px]"],
  [<T><path d="M0 2h16v1.500H0z" fill="#a3a5a8" /><path d="M1 5h3v2H1zM8 5h6v5H8z" fill="#e5e5e8" /></T>, "ssh.png", "Pictures", "81.7 kB", "Image", "11 Jan", ""],
  [<T><rect x="1" y="0" width="14" height="16" rx="2" fill="#2a9d96" stroke="#38716d" strokeWidth=".6" /><path d="M7.500 1v5" stroke="#d8f1ef" strokeWidth="2" strokeDasharray="1 1" /><path d="M6.500 4h2.500v3H6.500z" fill="#d8f1ef" /><text x="3.500" y="13.500" fontSize="5" fontWeight="700" fill="#aadfdb" fontFamily="Noto Sans">ZIP</text></T>, "HTML_20Report.zip", "Downloads", "2.2 kB", "Archive", "11 Jan", "tracking-[0.32px]"],
  [<T><path d="M0 3h16v9H0z" fill="#22271c" /><path d="M0 3h16v1H0z" fill="#3a3f37" /><path d="M0 11.500h16v1H0z" fill="#264d66" /></T>, "Screenshot from 2024-01…", "Pictures", "88.9 kB", "Image", "8 Jan", SHOT],
  [<T><path d="M0 1h16v15H0z" fill="#ececf0" /><path d="M0 0h16v1.300H0z" fill="#6a66df" /><path d="M2 3h4v1H2zM8 3h6v1H8zM2 6h3v1H2zM8 6h6v1H8zM2 9h4v1H2zM8 9h6v1H8zM2 12h3v1H2zM7 12h5v1H7z" fill="#c9c9d1" /></T>, "image (14).png", "Downloads", "57.1 kB", "Image", "8 Jan", ""],
];

const COLS = "grid grid-cols-[219px_199px_79px_103px_1fr]";

function FileDialog() {
  return (
    <section className={`absolute top-[210px] left-[290px] flex h-[374px] w-[856px] flex-col overflow-hidden rounded-xl bg-[#fafafa] text-[14px] whitespace-nowrap text-[#323232] shadow-[0_3px_14px_3px_rgba(0,0,0,0.32),0_6px_36px_6px_rgba(0,0,0,0.14)] ${UI}`}>
      <div className="flex h-[47px] shrink-0 items-center border-b border-[#d2d2d2] bg-[#ebebeb] px-[6px] pb-px font-bold text-[#2d2d2d]">
        <button className="h-[34px] w-[82px] rounded-md bg-[#d9d9d9] text-[14px] tracking-[0.3px]">Cancel</button>
        <span className="flex-1 pl-[31px] text-center tracking-[0.4px]">Open Files</span>
        <svg viewBox="0 0 16 16" className="mr-[15px] size-4" fill="none" stroke="#333" strokeWidth="1.100"><circle cx="7" cy="7.500" r="6" /><path d="M11.500 12l3 3" /></svg>
        <button className="h-[34px] w-[82px] rounded-md bg-[#ec9f84] text-[14px] tracking-[0.3px] text-[#faf0ec]">Open</button>
      </div>
      <div className="flex h-[280px] shrink-0">
        <aside className="flex w-[173px] shrink-0 flex-col gap-0.5 px-[6px] pt-[6px]">
          {PLACES.map((p, i) => (
            <div key={p.label} className={`flex h-9 shrink-0 items-center gap-2 rounded-md pl-[14px] ${i === 0 ? "bg-[#e6e6e6]" : ""}`}>
              {p.icon}<span className="pb-[2px] tracking-[0.1px]">{p.label}</span>
            </div>
          ))}
          <div className="mt-[6px] h-px shrink-0 bg-[#dcdcdc]" />
        </aside>
        <div className="flex flex-1 flex-col border-l border-[#d7d7d7] bg-white">
          <div className={`${COLS} h-[31px] shrink-0 items-center border-b border-[#d9d9d9] pl-1 text-[12px] font-bold text-[#979797]`}>
            <span className="tracking-[-0.7px]">Name</span><span className="tracking-[-0.35px]">Location</span><span>Size</span><span>Type</span><span>Accessed</span>
          </div>
          <div className="flex-1 overflow-hidden text-black">
            <div className="-mt-[3px] pl-2">
              {FILES.map(([icon, name, loc, size, type, date, tracking], i) => (
                <div key={i} className={`${COLS} h-[21px] items-center`}>
                  <span className="flex items-center gap-2">{icon}<span className={`pb-[2px] ${tracking}`}>{name}</span></span>
                  <span className={loc === "Pictures" ? "pb-[2px] tracking-[0.25px]" : "pb-[2px]"}>{loc}</span>
                  <span className="pb-[2px]">{size}</span><span className="pb-[2px] tracking-[0.1px]">{type}</span><span className="pb-[2px] tracking-[0.4px]">{date}</span>
                </div>
              ))}
            </div>
          </div>
        </div>
      </div>
      <div className="flex flex-1 items-center border-t border-[#d5d5d5] pr-[6px] pl-[10px]">
        <span className="size-5 rounded-[5px] border-2 border-[#dedede]" />
        <span className="ml-1 pb-[2px] tracking-[0.05px]">Open files read-only</span>
        <div className="ml-auto flex h-[34px] w-[90px] items-center gap-2 rounded-md bg-[#e6e6e6] pl-[10px] font-bold">
          <span className="pb-[2px] tracking-[0.1px]">(None)</span>
          <svg viewBox="0 0 12 7" className="h-[7px] w-3" fill="none" stroke="#333" strokeWidth="1.100"><path d="M1 1l5 4.500L11 1" /></svg>
        </div>
      </div>
    </section>
  );
}

export default function App() {
  return (
    <div className="relative flex h-[768px] w-[1366px] flex-col overflow-hidden bg-[#4b4b4b]">
      <TopBar />
      <main className="flex min-h-0 flex-1">
        <div className="relative w-[70px] shrink-0">
          <Spreadsheet />
          <Dock />
        </div>
        <div className="flex w-[1296px] flex-col">
          <TabStrip />
          <Toolbar />
          <GithubPage />
        </div>
      </main>
      <FileDialog />
    </div>
  );
}
